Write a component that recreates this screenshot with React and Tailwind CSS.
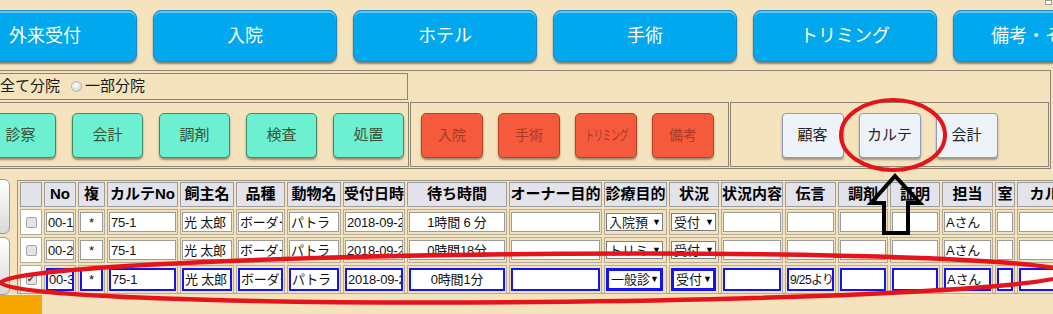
import React from 'react';

const topTabs = ['外来受付', '入院', 'ホテル', '手術', 'トリミング', '備考・その他'];
const greenBtns = ['診察', '会計', '調剤', '検査', '処置'];
const redBtns = ['入院', '手術', 'トリミング', '備考'];
const whiteBtns = ['顧客', 'カルテ', '会計'];

const headers = ['', 'No', '複', 'カルテNo', '飼主名', '品種', '動物名', '受付日時', '待ち時間', 'オーナー目的', '診療目的', '状況', '状況内容', '伝言', '調剤', '証明', '担当', '室', 'カルテ確認'];

const rows = [
  { no: '00-1', wait: '1時間 6 分', purpose: '入院預', msg: '' },
  { no: '00-2', wait: '0時間18分', purpose: 'トリミ', msg: '' },
  { no: '00-3', wait: '0時間1分', purpose: '一般診', msg: '9/25より', checked: true, active: true },
];

const gridCols =
  'grid grid-cols-[22px_32px_27px_71px_54px_49px_54px_62px_100px_93px_63px_50px_62px_51px_50px_50px_51px_20px_100px] gap-[2px]';

const Field = ({ text = '', active, center, small }) => (
  <div
    className={`h-full w-full bg-white overflow-hidden whitespace-nowrap leading-none flex items-center px-[1px] text-[#111] ${
      small ? 'text-[12px] tracking-[-0.6px]' : 'text-[13px] tracking-[-0.2px]'
    } ${center ? 'justify-center' : ''} ${active ? 'border-2 border-[#1414f0]' : 'border border-[#9b9b9b]'}`}
  >
    {text}
  </div>
);

const Select = ({ text, active, w }) => (
  <div
    className={`${w} flex items-center bg-white text-[13px] leading-none pl-[2px] pr-[1px] text-[#111] ${
      active ? 'h-[23px] border-[3px] border-[#1414f0]' : 'h-[18px] border border-[#7e7e7e]'
    }`}
  >
    <span className="flex-1 overflow-hidden whitespace-nowrap">{text}</span>
    <span className="shrink-0 text-[9px] text-black">▼</span>
  </div>
);

const Cell = ({ children, white }) => (
  <div className={`h-full border border-[#b3ac9b] px-[1px] py-[2px] flex items-center ${white ? 'bg-white justify-center' : 'bg-[#f2e3bf]'}`}>
    {children}
  </div>
);

const Check = ({ checked }) => (
  <div className="w-[11px] h-[11px] border border-[#a4a4a4] rounded-[2px] bg-[#e4e4e4] flex items-center justify-center text-[9px] leading-none text-[#444]">
    {checked ? '✔' : ''}
  </div>
);

export default function App() {
  return (
    <div className="relative w-[1053px] h-[314px] overflow-hidden bg-[#f4e3bd] font-[family-name:'Liberation_Sans','Noto_Sans_CJK_JP',sans-serif]">
      {/* top tabs */}
      <div className="flex gap-[16px] pt-[10px] ml-[-47px]">
        {topTabs.map((t) => (
          <div
            key={t}
            className="w-[184px] h-[52px] shrink-0 rounded-[8px] bg-[#01a8ee] border border-[#1b8cc4] shadow-[0_2px_2px_rgba(40,50,60,0.55),inset_0_2px_0_rgba(255,255,255,0.35)] flex items-center justify-center text-white text-[18px] whitespace-nowrap"
          >
            {t}
          </div>
        ))}
      </div>

      {/* control box */}
      <div className="mt-[8px] ml-[-2px] w-[1053px] border border-[#8d8574] pt-[2px] pb-[1px]">
        <div className="ml-[-2px] w-[411px] h-[27px] border border-[#8d8574] flex items-center pl-[2px] text-[15px] text-[#1a1a1a]">
          <span>全て分院</span>
          <span className="ml-[11px] w-[11px] h-[11px] rounded-full border border-[#b0b0b0] bg-[radial-gradient(circle_at_40%_35%,#ffffff,#c9c9c9)]" />
          <span className="ml-[3px]">一部分院</span>
        </div>
        <div className="mt-[2px] flex h-[65px]">
          <div className="ml-[-2px] w-[412px] shrink-0 border border-[#8d8574] flex justify-end gap-[16px] pr-[4px] pt-[10px]">
            {greenBtns.map((t) => (
              <div
                key={t}
                className="w-[71px] h-[45px] shrink-0 rounded-[5px] bg-[#6df0d1] border border-[#3c8f62] shadow-[0_2px_2px_rgba(60,60,40,0.5)] flex items-center justify-center text-[15px] text-[#3d5238]"
              >
                {t}
              </div>
            ))}
          </div>
          <div className="ml-[1px] w-[319px] shrink-0 border border-[#8d8574] flex gap-[15px] pl-[10px] pt-[10px]">
            {redBtns.map((t) => (
              <div
                key={t}
                className="w-[62px] h-[45px] shrink-0 rounded-[5px] bg-[#f65a3c] border border-[#b5402a] shadow-[0_2px_2px_rgba(70,40,30,0.5)] flex items-center justify-center text-[14px] text-[#a63b24] whitespace-nowrap overflow-hidden"
              >
                <span className={t.length > 3 ? 'inline-block scale-x-[0.66] tracking-[-1px]' : ''}>{t}</span>
              </div>
            ))}
          </div>
          <div className="ml-[1px] w-[319px] shrink-0 border border-[#8d8574] flex justify-center gap-[15px] pt-[10px]">
            {whiteBtns.map((t) => (
              <div
                key={t}
                className="w-[62px] h-[45px] shrink-0 rounded-[4px] bg-[#eef2f9] border border-[#8d9bb6] shadow-[0_2px_2px_rgba(60,60,70,0.45)] flex items-center justify-center text-[15px] text-[#222]"
              >
                {t}
              </div>
            ))}
          </div>
        </div>
      </div>

      {/* table area */}
      <div className="flex items-start">
        <div className="w-[10px] shrink-0 pt-[10px] flex flex-col gap-[3px]">
          <div className="ml-[-20px] w-[30px] h-[55px] rounded-[6px] border border-[#9c9c9c] bg-[linear-gradient(#ffffff,#d9d9d9)]" />
          <div className="ml-[-20px] w-[30px] h-[58px] rounded-[6px] border border-[#9c9c9c] bg-[linear-gradient(#ffffff,#d9d9d9)]" />
        </div>
        <div className="mt-[11px] ml-[7px] shrink-0 border border-[#9c9684] px-[2px] pt-[1px] pb-[1px]">
          <div className={gridCols}>
            {headers.map((h, i) => (
              <div
                key={i}
                className="h-[25px] border border-[#9d9d9d] bg-[#e3e3eb] flex items-center justify-center overflow-hidden whitespace-nowrap text-[15px] font-bold text-black"
              >
                {h}
              </div>
            ))}
          </div>
          {rows.map((r) => (
            <div key={r.no} className={`${gridCols} mt-[2px] ${r.active ? 'h-[27px]' : 'h-[26px]'}`}>
              <Cell white>
                <Check checked={r.checked} />
              </Cell>
              <Cell><Field text={r.no} active={r.active} /></Cell>
              <Cell><Field text="*" center active={r.active} /></Cell>
              <Cell><Field text="75-1" active={r.active} /></Cell>
              <Cell><Field text="光 太郎" active={r.active} /></Cell>
              <Cell><Field text="ボーダーコリー" active={r.active} /></Cell>
              <Cell><Field text="パトラ" active={r.active} /></Cell>
              <Cell><Field text="2018-09-25 10:00" active={r.active} /></Cell>
              <Cell><Field text={r.wait} center active={r.active} /></Cell>
              <Cell><Field active={r.active} /></Cell>
              <Cell><Select text={r.purpose} active={r.active} w="w-[57px]" /></Cell>
              <Cell><Select text="受付" active={r.active} w="w-[45px]" /></Cell>
              <Cell><Field active={r.active} /></Cell>
              <Cell><Field text={r.msg} small active={r.active} /></Cell>
              <Cell><Field active={r.active} /></Cell>
              <Cell><Field active={r.active} /></Cell>
              <Cell><Field text="Aさん" active={r.active} /></Cell>
              <Cell><Field active={r.active} /></Cell>
              <Cell><Field active={r.active} /></Cell>
            </div>
          ))}
        </div>
      </div>
      <div className="w-[42px] h-[20px] bg-[#f5a700]" />

      {/* small corner box */}
      <div className="absolute top-0 right-[1px] w-[7px] h-[5px] border border-[#9a9a9a] bg-white" />

      {/* annotations */}
      <svg className="absolute top-0 left-0 pointer-events-none" width="1053" height="314" viewBox="0 0 1053 314">
        <ellipse cx="893" cy="135" rx="52" ry="35" fill="none" stroke="#e5141b" strokeWidth="4" />
        <ellipse cx="535" cy="278" rx="534" ry="24" fill="none" stroke="#e5141b" strokeWidth="4.5" transform="rotate(-0.5 535 278)" />
        <polygon
          points="895,176 920,203 908,203 908,233 884,233 884,203 871,203"
          fill="none"
          stroke="#000"
          strokeWidth="4"
          strokeLinejoin="miter"
        />
      </svg>
    </div>
  );
}
